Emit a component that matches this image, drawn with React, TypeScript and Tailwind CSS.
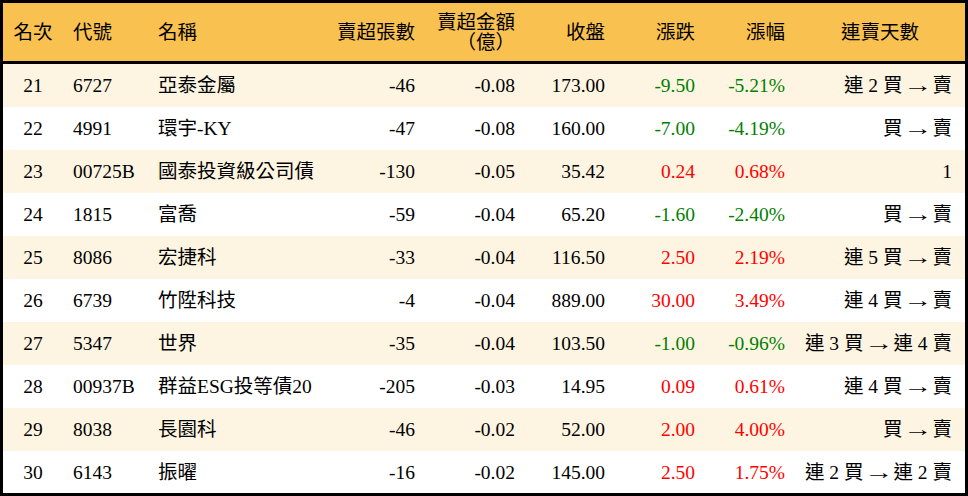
import React from 'react';

type Row = {
  rank: number;
  code: string;
  name: string;
  qty: string;
  amount: string;
  close: string;
  change: string;
  pct: string;
  streak: string;
};

const rows: Row[] = [
  { rank: 21, code: '6727', name: '亞泰金屬', qty: '-46', amount: '-0.08', close: '173.00', change: '-9.50', pct: '-5.21%', streak: '連 2 買 → 賣' },
  { rank: 22, code: '4991', name: '環宇-KY', qty: '-47', amount: '-0.08', close: '160.00', change: '-7.00', pct: '-4.19%', streak: '買 → 賣' },
  { rank: 23, code: '00725B', name: '國泰投資級公司債', qty: '-130', amount: '-0.05', close: '35.42', change: '0.24', pct: '0.68%', streak: '1' },
  { rank: 24, code: '1815', name: '富喬', qty: '-59', amount: '-0.04', close: '65.20', change: '-1.60', pct: '-2.40%', streak: '買 → 賣' },
  { rank: 25, code: '8086', name: '宏捷科', qty: '-33', amount: '-0.04', close: '116.50', change: '2.50', pct: '2.19%', streak: '連 5 買 → 賣' },
  { rank: 26, code: '6739', name: '竹陞科技', qty: '-4', amount: '-0.04', close: '889.00', change: '30.00', pct: '3.49%', streak: '連 4 買 → 賣' },
  { rank: 27, code: '5347', name: '世界', qty: '-35', amount: '-0.04', close: '103.50', change: '-1.00', pct: '-0.96%', streak: '連 3 買 → 連 4 賣' },
  { rank: 28, code: '00937B', name: '群益ESG投等債20', qty: '-205', amount: '-0.03', close: '14.95', change: '0.09', pct: '0.61%', streak: '連 4 買 → 賣' },
  { rank: 29, code: '8038', name: '長園科', qty: '-46', amount: '-0.02', close: '52.00', change: '2.00', pct: '4.00%', streak: '買 → 賣' },
  { rank: 30, code: '6143', name: '振曜', qty: '-16', amount: '-0.02', close: '145.00', change: '2.50', pct: '1.75%', streak: '連 2 買 → 連 2 賣' },
];

const cols = 'grid grid-cols-[60px_85px_182px_95px_100px_90px_90px_90px_170px]';

// long arrow between the two halves, kept in its own box so nothing overlaps
const Streak: React.FC<{ text: string }> = ({ text }) => {
  const parts = text.split('→');
  if (parts.length < 2) return <>{text}</>;
  return (
    <>
      {parts[0].trim()}
      <span className="inline-block w-[20px] mx-[5px] text-center">
        <span className="inline-block scale-x-150">→</span>
      </span>
      {parts[1].trim()}
    </>
  );
};

const App: React.FC = () => {
  return (
    <div
      className="w-[968px] h-[496px] bg-white border-[3px] border-black text-[19.5px] text-black overflow-hidden"
      style={{ fontFamily: "'Liberation Serif', 'Noto Sans CJK TC', serif" }}
    >
      <div className={`${cols} h-[57px] items-center bg-[#f9c150] border-b-[3px] border-black box-content leading-[20px] pt-[1px]`}>
        <span className="text-center">名次</span>
        <span className="pl-[10px]">代號</span>
        <span className="pl-[10px]">名稱</span>
        <span className="text-right pr-[10px]">賣超張數</span>
        <span className="text-right pr-[10px] flex flex-col">
          <span>賣超金額</span>
          <span>（億）</span>
        </span>
        <span className="text-right pr-[10px]">收盤</span>
        <span className="text-right pr-[10px]">漲跌</span>
        <span className="text-right pr-[10px]">漲幅</span>
        <span className="text-center">連賣天數</span>
      </div>
      {rows.map((r, i) => {
        const down = r.change.startsWith('-');
        const color = down ? 'text-[#008000]' : 'text-[#ff0000]';
        return (
          <div
            key={r.rank}
            className={`${cols} h-[43px] items-center whitespace-nowrap ${i % 2 === 0 ? 'bg-[#fdf5e2]' : 'bg-white'}`}
          >
            <span className="text-center">{r.rank}</span>
            <span className="pl-[10px]">{r.code}</span>
            <span className="pl-[10px]">{r.name}</span>
            <span className="text-right pr-[10px]">{r.qty}</span>
            <span className="text-right pr-[10px]">{r.amount}</span>
            <span className="text-right pr-[10px]">{r.close}</span>
            <span className={`text-right pr-[10px] ${color}`}>{r.change}</span>
            <span className={`text-right pr-[10px] ${color}`}>{r.pct}</span>
            <span className="text-right pr-[13px]">
              <Streak text={r.streak} />
            </span>
          </div>
        );
      })}
    </div>
  );
};

export default App;
